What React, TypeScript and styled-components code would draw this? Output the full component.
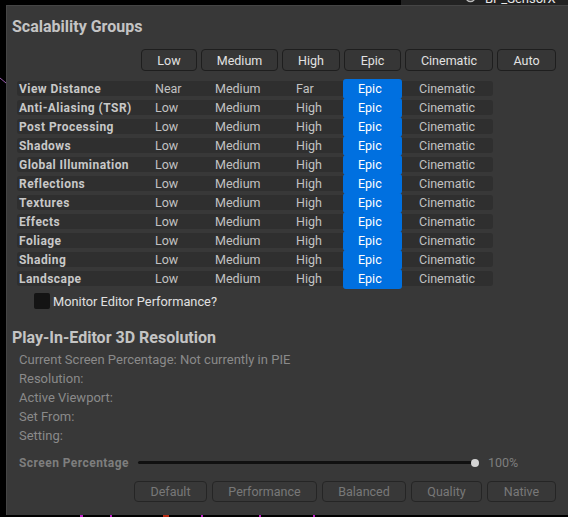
import React from 'react';
import styled, { createGlobalStyle } from 'styled-components';

const GlobalStyle = createGlobalStyle`
  html, body { margin: 0; padding: 0; background: #000; }
  body { font-family: Roboto, "Noto Sans", "Liberation Sans", sans-serif; }
  * { box-sizing: border-box; }
`;

const Screen = styled.div`
  width: 568px;
  height: 517px;
  overflow: hidden;
  background: #000;
  display: flex;
  flex-direction: column;
`;

const TopStrip = styled.div`
  height: 5px;
  flex-shrink: 0;
  display: flex;
`;

const TopBlack = styled.div`
  width: 401px;
  background: #000;
`;

const TopTab = styled.div`
  flex: 1;
  background: #222;
  overflow: hidden;
  display: flex;
  align-items: flex-end;
  padding-left: 63px;
  gap: 8px;
`;

const TabIcon = styled.svg`
  width: 13px;
  height: 13px;
  flex-shrink: 0;
`;

const TabText = styled.span`
  font-size: 13px;
  line-height: 13px;
  color: #e8e8e8;
  white-space: nowrap;
`;

const Middle = styled.div`
  flex: 1;
  display: flex;
  min-height: 0;
`;

const Gutter = styled.div`
  width: 6px;
  flex-shrink: 0;
  display: flex;
  flex-direction: column;
  padding-top: 72px;
`;

const Panel = styled.div`
  flex: 1;
  background: #383838;
  border-top: 1px solid #454545;
  border-left: 1px solid #454545;
  padding: 0 12px 0 5px;
  display: flex;
  flex-direction: column;
`;

const BottomStrip = styled.div`
  height: 2px;
  flex-shrink: 0;
  display: flex;
`;

const Speck = styled.div<{ $x: number; $w: number; $c: string }>`
  margin-left: ${(p) => p.$x}px;
  width: ${(p) => p.$w}px;
  background: ${(p) => p.$c};
`;

const SectionTitle = styled.div<{ $top: number }>`
  margin-top: ${(p) => p.$top}px;
  font-size: 16px;
  line-height: 20px;
  font-weight: 700;
  color: #c4c4c4;
`;

const LevelGrid = styled.div<{ $cols: string }>`
  display: grid;
  grid-template-columns: ${(p) => p.$cols};
  column-gap: 4px;
  margin-left: 5px;
`;

const HeaderRow = styled(LevelGrid)`
  margin-top: 12px;
  height: 22px;
`;

const HeaderButton = styled.div`
  border: 1px solid #1e1e1e;
  border-radius: 4px;
  background: #363636;
  color: #e2e2e2;
  font-size: 12.5px;
  display: flex;
  align-items: center;
  justify-content: center;
`;

const Table = styled.div`
  margin-top: 8px;
  display: flex;
  flex-direction: column;
`;

const Row = styled.div`
  height: 19px;
  padding: 2px 0;
`;

const Band = styled(LevelGrid)`
  height: 15px;
  background: #2f2f2f;
  border-radius: 3px;
  width: 476px;
`;

const Label = styled.div`
  padding-left: 2px;
  font-size: 12px;
  letter-spacing: 0.45px;
  line-height: 16px;
  font-weight: 700;
  color: #c8c8c8;
  white-space: nowrap;
`;

const Value = styled.div<{ $on?: boolean }>`
  font-size: 12.5px;
  line-height: ${(p) => (p.$on ? '19px' : '15px')};
  padding-left: ${(p) => (p.$on ? '15px' : '14px')};
  color: ${(p) => (p.$on ? '#ffffff' : '#c2c2c2')};
  background: ${(p) => (p.$on ? '#0070e0' : 'transparent')};
  margin: ${(p) => (p.$on ? '-2px -1px' : '0')};
  border-radius: ${(p) => (p.$on ? '3px' : '0')};
`;

const CheckRow = styled.label`
  margin-top: 5px;
  margin-left: 22px;
  height: 16px;
  display: flex;
  align-items: center;
  gap: 3px;
  font-size: 12.8px;
  color: #e0e0e0;
`;

const CheckBox = styled.span`
  width: 16px;
  height: 16px;
  border-radius: 2px;
  background: #141414;
  flex-shrink: 0;
`;

const InfoList = styled.div`
  margin-top: 2px;
  margin-left: 7px;
  display: flex;
  flex-direction: column;
`;

const InfoLine = styled.div`
  font-size: 13px;
  line-height: 19px;
  color: #8a8a8a;
`;

const SliderRow = styled.div`
  margin-top: 8px;
  margin-left: 7px;
  height: 19px;
  display: flex;
  align-items: center;
`;

const SliderLabel = styled.div`
  width: 119px;
  font-size: 12px;
  letter-spacing: 0.45px;
  font-weight: 700;
  color: #7e7e7e;
  white-space: nowrap;
`;

const Track = styled.div`
  position: relative;
  width: 338px;
  height: 3px;
  border-radius: 2px;
  background: #101010;
`;

const Thumb = styled.div`
  position: absolute;
  right: -3px;
  top: 50%;
  width: 8px;
  height: 8px;
  margin-top: -4px;
  border-radius: 50%;
  background: #d4d4d4;
`;

const Percent = styled.div`
  margin-left: 12px;
  font-size: 12.5px;
  color: #7e7e7e;
`;

const PresetRow = styled.div`
  margin-top: 9px;
  display: flex;
  justify-content: flex-end;
  gap: 5px;
`;

const PresetButton = styled.div<{ $w: number }>`
  width: ${(p) => p.$w}px;
  height: 21px;
  border: 1px solid #252525;
  border-radius: 4px;
  display: flex;
  align-items: center;
  justify-content: center;
  font-size: 12.5px;
  color: #787878;
`;

const HEADER_COLS = '120px 56px 77px 58px 57px 88px 59px';
const ROW_COLS = '120px 56px 77px 58px 57px 88px';

const groups: { name: string; levels: string[] }[] = [
  { name: 'View Distance', levels: ['Near', 'Medium', 'Far', 'Epic', 'Cinematic'] },
  { name: 'Anti-Aliasing (TSR)', levels: ['Low', 'Medium', 'High', 'Epic', 'Cinematic'] },
  { name: 'Post Processing', levels: ['Low', 'Medium', 'High', 'Epic', 'Cinematic'] },
  { name: 'Shadows', levels: ['Low', 'Medium', 'High', 'Epic', 'Cinematic'] },
  { name: 'Global Illumination', levels: ['Low', 'Medium', 'High', 'Epic', 'Cinematic'] },
  { name: 'Reflections', levels: ['Low', 'Medium', 'High', 'Epic', 'Cinematic'] },
  { name: 'Textures', levels: ['Low', 'Medium', 'High', 'Epic', 'Cinematic'] },
  { name: 'Effects', levels: ['Low', 'Medium', 'High', 'Epic', 'Cinematic'] },
  { name: 'Foliage', levels: ['Low', 'Medium', 'High', 'Epic', 'Cinematic'] },
  { name: 'Shading', levels: ['Low', 'Medium', 'High', 'Epic', 'Cinematic'] },
  { name: 'Landscape', levels: ['Low', 'Medium', 'High', 'Epic', 'Cinematic'] },
];

const headerButtons = ['Low', 'Medium', 'High', 'Epic', 'Cinematic', 'Auto'];
const presets: [string, number][] = [
  ['Default', 73],
  ['Performance', 105],
  ['Balanced', 84],
  ['Quality', 71],
  ['Native', 69],
];
const info = [
  'Current Screen Percentage: Not currently in PIE',
  'Resolution:',
  'Active Viewport:',
  'Set From:',
  'Setting:',
];

export default function App() {
  return (
    <Screen>
      <GlobalStyle />
      <TopStrip>
        <TopBlack />
        <TopTab>
          <TabIcon viewBox="0 0 13 13">
            <circle cx="6.5" cy="5" r="4.5" fill="none" stroke="#bdbdbd" strokeWidth="1.5" />
          </TabIcon>
          <TabText>BP_SensorX</TabText>
        </TopTab>
      </TopStrip>
      <Middle>
        <Gutter>
          <svg width="6" height="10" viewBox="0 0 6 10">
            <line x1="0" y1="1" x2="6" y2="6" stroke="#9a5fb0" strokeWidth="1" />
          </svg>
        </Gutter>
        <Panel>
          <SectionTitle $top={11}>Scalability Groups</SectionTitle>
          <HeaderRow $cols={HEADER_COLS}>
            <span />
            {headerButtons.map((b) => (
              <HeaderButton key={b}>{b}</HeaderButton>
            ))}
          </HeaderRow>
          <Table>
            {groups.map((g) => (
              <Row key={g.name}>
                <Band $cols={ROW_COLS}>
                  <Label>{g.name}</Label>
                  {g.levels.map((l, i) => (
                    <Value key={i} $on={i === 3}>
                      {l}
                    </Value>
                  ))}
                </Band>
              </Row>
            ))}
          </Table>
          <CheckRow>
            <CheckBox />
            Monitor Editor Performance?
          </CheckRow>
          <SectionTitle $top={19}>Play-In-Editor 3D Resolution</SectionTitle>
          <InfoList>
            {info.map((t) => (
              <InfoLine key={t}>{t}</InfoLine>
            ))}
          </InfoList>
          <SliderRow>
            <SliderLabel>Screen Percentage</SliderLabel>
            <Track>
              <Thumb />
            </Track>
            <Percent>100%</Percent>
          </SliderRow>
          <PresetRow>
            {presets.map(([t, w]) => (
              <PresetButton key={t} $w={w}>
                {t}
              </PresetButton>
            ))}
          </PresetRow>
        </Panel>
      </Middle>
      <BottomStrip>
        <Speck $x={80} $w={3} $c="#c21ec8" />
        <Speck $x={27} $w={2} $c="#c21ec8" />
        <Speck $x={51} $w={6} $c="#b52a12" />
        <Speck $x={32} $w={2} $c="#c21ec8" />
        <Speck $x={56} $w={2} $c="#c21ec8" />
        <Speck $x={52} $w={2} $c="#c21ec8" />
      </BottomStrip>
    </Screen>
  );
}
